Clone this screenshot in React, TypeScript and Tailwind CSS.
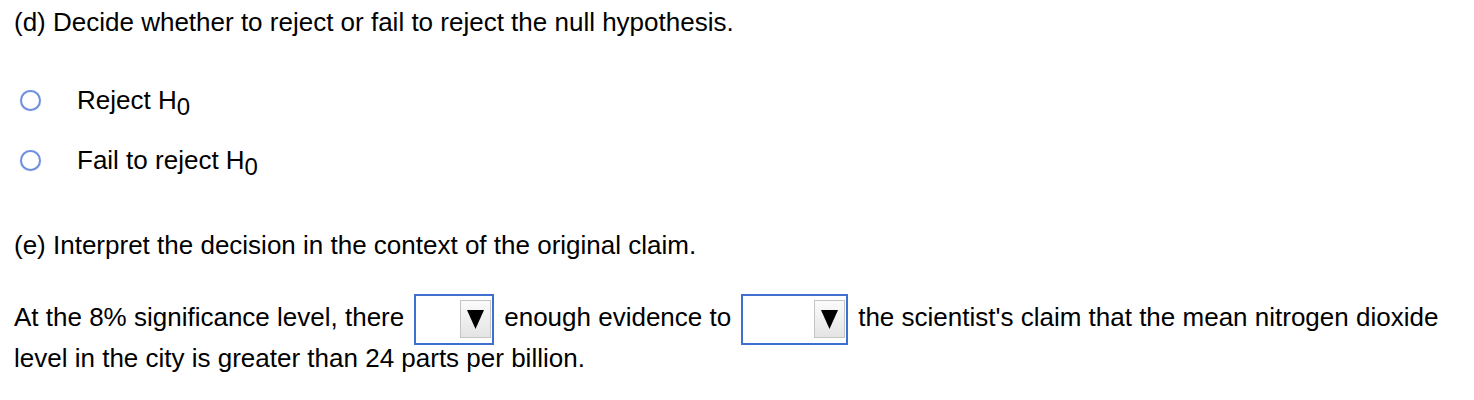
function Radio({ children }: { children: React.ReactNode }) {
  return (
    <div className="flex items-center h-[40px]">
      <span className="ml-[20px] w-[21px] h-[21px] rounded-full border-2 border-[#6d8fde] shadow-[0_0_1px_#9fb5ea]" />
      <span className="ml-[36px]">{children}</span>
    </div>
  );
}

function H0() {
  return (
    <span>
      H<sub className="text-[24px] relative top-[6px]">0</sub>
    </span>
  );
}

function Dropdown({ width }: { width: string }) {
  return (
    <span className={`inline-flex align-middle justify-end items-center h-[51px] -my-[12px] ml-[10px] mr-[10px] border-2 border-[#3f6fcf] bg-white ${width}`}>
      <span className="flex items-center justify-center w-[31px] h-[38px] mr-[1px] border border-[#c4c4c4] bg-gradient-to-b from-[#fbfbfb] to-[#e4e4e4]">
        <svg width="17" height="19" viewBox="0 0 17 19">
          <path d="M0 0 L17 0 L8.5 19 Z" fill="#000" />
        </svg>
      </span>
    </span>
  );
}

export default function App() {
  return (
    <div className="w-[1474px] h-[400px] bg-white text-black text-[26px] font-['Liberation_Sans',Arial,sans-serif] pl-[14px] pt-[6px]">
      <div className="h-[32px] leading-[32px]">(d) Decide whether to reject or fail to reject the null hypothesis.</div>
      <div className="-ml-[14px] mt-[42px] flex flex-col gap-[20px]">
        <Radio>
          Reject <H0 />
        </Radio>
        <Radio>
          Fail to reject <H0 />
        </Radio>
      </div>
      <div className="mt-[49px] h-[32px] leading-[32px]">(e) Interpret the decision in the context of the original claim.</div>
      <div className="mt-[36px] leading-[41px] w-[1445px]">
        At the 8% significance level, there<Dropdown width="w-[80px]" />enough evidence to<Dropdown width="w-[107px]" />the
        scientist's claim that the mean nitrogen dioxide level in the city is greater than 24 parts per billion.
      </div>
    </div>
  );
}
